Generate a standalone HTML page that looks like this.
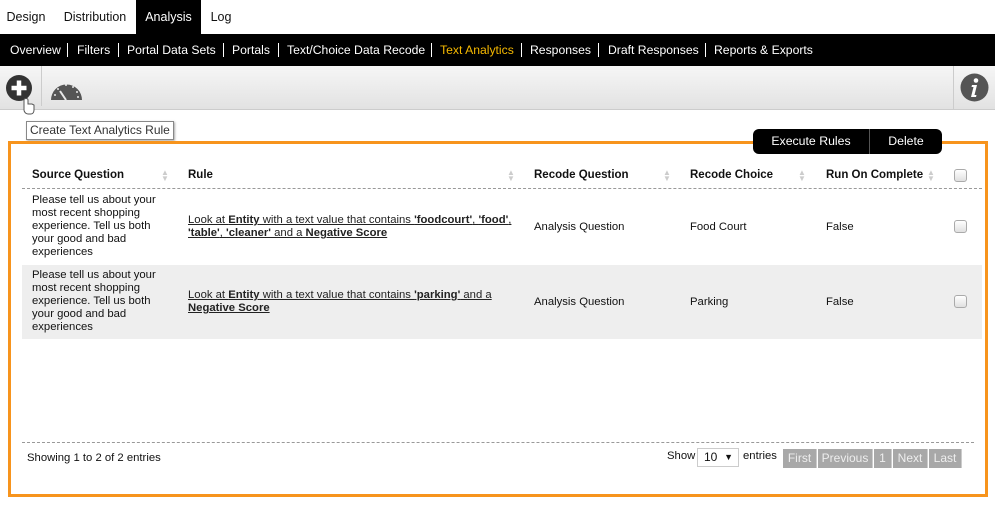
<!DOCTYPE html>
<html><head><style>
*{margin:0;padding:0;box-sizing:border-box}
body{width:995px;height:505px;background:#fff;font-family:"Liberation Sans",Arial,sans-serif;position:relative;overflow:hidden;color:#111}
.abs{position:absolute}
.tabs span{position:absolute;top:0;height:34px;line-height:34px;font-size:12.5px;text-align:center}
.nav{top:34px;left:0;width:995px;height:32px;background:#000;color:#fff;font-size:12.2px}
.nav span{position:absolute;top:9px}
.nav i{position:absolute;top:9px;width:1px;height:14px;background:#fff}
.tool{top:66px;left:0;width:995px;height:44px;background:linear-gradient(#f6f6f6,#e2e2e2);border-bottom:1px solid #ccc}
.th{position:absolute;top:169px;font-size:11.5px;font-weight:bold}
.td{position:absolute;font-size:11.3px;line-height:13px}
.rule{color:#222;text-decoration:underline}
.cb{position:absolute;width:13px;height:13px;border:1px solid #aaa;border-radius:3px;background:linear-gradient(#fff,#e0e0e0)}
.sort{position:absolute;top:170px;color:#ccc;font-size:8px;line-height:6px}
.pg{position:absolute;top:449px;height:19px;line-height:19px;background:#a8a8a8;color:#eee;font-size:12px;text-align:center;border-right:1px solid #ccc}
</style></head><body>
<div class="tabs">
<span style="left:0;width:52px">Design</span>
<span style="left:56px;width:78px">Distribution</span>
<span style="left:136px;width:65px;background:#000;color:#fff">Analysis</span>
<span style="left:201px;width:40px">Log</span>
</div>
<div class="abs nav">
<span style="left:10px">Overview</span><i style="left:67px"></i>
<span style="left:77px">Filters</span><i style="left:118px"></i>
<span style="left:127px">Portal Data Sets</span><i style="left:223px"></i>
<span style="left:232px">Portals</span><i style="left:278px"></i>
<span style="left:287px">Text/Choice Data Recode</span><i style="left:431px"></i>
<span style="left:440px;color:#f5b800">Text Analytics</span><i style="left:521px"></i>
<span style="left:530px">Responses</span><i style="left:598px"></i>
<span style="left:608px">Draft Responses</span><i style="left:705px"></i>
<span style="left:714px">Reports &amp; Exports</span>
</div>
<div class="abs tool">
<svg class="abs" style="left:5px;top:8px" width="32" height="42" viewBox="0 0 32 42"><circle cx="14" cy="14" r="13" fill="#333"/><path d="M14 6.5v15M6.5 14h15" stroke="#fff" stroke-width="4.5"/><path d="M19 26v10c0 2 2 4 4 4h3c2 0 3-2 3-4v-5l-2-1-2 0-2 0v-4c0-2-4-2-4 0z" fill="#fff" stroke="#555" stroke-width="1"/></svg>
<div class="abs" style="left:41px;top:0;width:1px;height:40px;background:#ccc"></div>
<svg class="abs" style="left:50px;top:13px" width="33" height="22" viewBox="0 0 33 22"><path d="M1 21A15.5 15.5 0 0 1 32 21z" fill="#555"/><path d="M16 21l-6-9" stroke="#e8e8e8" stroke-width="2"/><g fill="#e8e8e8"><circle cx="5" cy="16" r="1"/><circle cx="8" cy="10" r="1"/><circle cx="16" cy="6" r="1"/><circle cx="23" cy="8" r="1"/><circle cx="27" cy="13" r="1"/><circle cx="28" cy="18" r="1"/></g></svg>
<div class="abs" style="left:953px;top:0;width:1px;height:44px;background:#ccc"></div>
<svg class="abs" style="left:960px;top:7px" width="29" height="29" viewBox="0 0 29 29"><circle cx="14.5" cy="14.5" r="14" fill="#555"/><circle cx="16" cy="7.5" r="2.3" fill="#fff"/><path d="M12 12h5l-2.5 10h2l-.5 2h-5l2.5-10h-2z" fill="#fff"/></svg>
</div>
<div class="abs" style="left:26px;top:121px;height:19px;padding:0 3px;line-height:17px;font-size:12px;border:1px solid #888;background:#fff;color:#333;box-shadow:1px 1px 2px #aaa">Create Text Analytics Rule</div>
<div class="abs" style="left:8px;top:141px;width:980px;height:356px;border:3px solid #f7941d"></div>
<div class="abs" style="left:753px;top:129px;width:189px;height:25px;background:#000;border-radius:6px"></div>
<div class="abs" style="left:753px;top:129px;width:116px;height:25px;line-height:25px;color:#fff;font-size:12.3px;text-align:center">Execute Rules</div>
<div class="abs" style="left:869px;top:129px;width:1px;height:25px;background:#555"></div>
<div class="abs" style="left:870px;top:129px;width:72px;height:25px;line-height:25px;color:#fff;font-size:12.3px;text-align:center">Delete</div>
<div class="th" style="left:32px">Source Question</div>
<div class="th" style="left:188px">Rule</div>
<div class="th" style="left:534px">Recode Question</div>
<div class="th" style="left:690px">Recode Choice</div>
<div class="th" style="left:826px">Run On Complete</div>
<div class="sort" style="left:161px">▲<br>▼</div>
<div class="sort" style="left:507px">▲<br>▼</div>
<div class="sort" style="left:663px">▲<br>▼</div>
<div class="sort" style="left:798px">▲<br>▼</div>
<div class="sort" style="left:927px">▲<br>▼</div>
<div class="cb" style="left:954px;top:169px"></div>
<div class="abs" style="left:22px;top:188px;width:960px;border-top:1px dashed #999"></div>
<div class="abs" style="left:22px;top:265px;width:960px;height:74px;background:#eee"></div>
<div class="td" style="left:32px;top:194px;width:140px">Please tell us about your most recent shopping experience. Tell us both your good and bad experiences</div>
<div class="td rule" style="left:188px;top:214px;width:330px">Look at <b>Entity</b> with a text value that contains <b>'foodcourt'</b>, <b>'food'</b>, <b>'table'</b>, <b>'cleaner'</b> and a <b>Negative Score</b></div>
<div class="td" style="left:534px;top:221px">Analysis Question</div>
<div class="td" style="left:690px;top:221px">Food Court</div>
<div class="td" style="left:826px;top:221px">False</div>
<div class="cb" style="left:954px;top:220px"></div>
<div class="td" style="left:32px;top:269px;width:140px">Please tell us about your most recent shopping experience. Tell us both your good and bad experiences</div>
<div class="td rule" style="left:188px;top:289px;width:310px">Look at <b>Entity</b> with a text value that contains <b>'parking'</b> and a <b>Negative Score</b></div>
<div class="td" style="left:534px;top:296px">Analysis Question</div>
<div class="td" style="left:690px;top:296px">Parking</div>
<div class="td" style="left:826px;top:296px">False</div>
<div class="cb" style="left:954px;top:295px"></div>
<div class="abs" style="left:22px;top:442px;width:952px;border-top:1px dashed #999"></div>
<div class="td" style="left:27px;top:452px">Showing 1 to 2 of 2 entries</div>
<div class="td" style="left:667px;top:450px">Show</div>
<div class="abs" style="left:697px;top:448px;width:42px;height:19px;border:1px solid #ccc;font-size:12px;line-height:17px;padding-left:6px">10<span style="position:absolute;right:5px;font-size:9px">▼</span></div>
<div class="td" style="left:743px;top:450px">entries</div>
<div class="pg" style="left:783px;width:34px">First</div>
<div class="pg" style="left:818px;width:55px">Previous</div>
<div class="pg" style="left:874px;width:18px">1</div>
<div class="pg" style="left:893px;width:35px">Next</div>
<div class="pg" style="left:929px;width:33px">Last</div>
</body></html>
